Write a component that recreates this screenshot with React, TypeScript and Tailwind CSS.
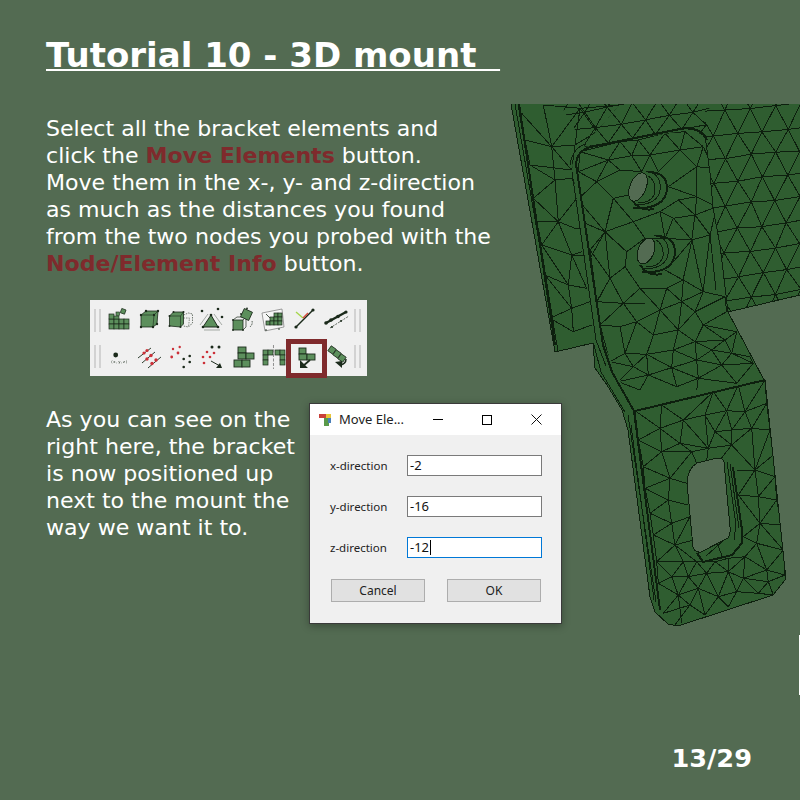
import React from "react";

type P = [number, number];
function quadMesh(a: P, b: P, c: P, d: P, nu: number, nv: number, seed: number, jit = 2) {
  let s = seed;
  const rnd = () => {
    s = (s * 9301 + 49297) % 233280;
    return s / 233280 - 0.5;
  };
  const v: Record<string, P> = {};
  for (let j = -1; j <= nv + 1; j++) {
    for (let i = -2; i <= nu + 2; i++) {
      const u = (i + (j % 2 !== 0 ? 0.5 : 0)) / nu;
      const t = j / nv;
      const x = (1 - t) * ((1 - u) * a[0] + u * b[0]) + t * ((1 - u) * c[0] + u * d[0]);
      const y = (1 - t) * ((1 - u) * a[1] + u * b[1]) + t * ((1 - u) * c[1] + u * d[1]);
      v[i + "," + j] = [x + rnd() * jit, y + rnd() * jit];
    }
  }
  const seg = (p: P, q: P) => `M${p[0].toFixed(1)} ${p[1].toFixed(1)}L${q[0].toFixed(1)} ${q[1].toFixed(1)}`;
  let out = "";
  for (let j = -1; j <= nv + 1; j++) {
    for (let i = -2; i <= nu + 2; i++) {
      const p = v[i + "," + j];
      if (v[i + 1 + "," + j]) out += seg(p, v[i + 1 + "," + j]);
      if (j <= nv) {
        const odd = j % 2 !== 0;
        const n1 = v[i + "," + (j + 1)];
        const n2 = v[(odd ? i + 1 : i - 1) + "," + (j + 1)];
        if (n1) out += seg(p, n1);
        if (n2) out += seg(p, n2);
      }
    }
  }
  return out;
}

// edge lists traced at 3x: x1,y1,x2,y2 in crop pixels, offset to the page
function edges(ox: number, oy: number, list: number[]) {
  let out = "";
  for (let i = 0; i < list.length; i += 4) {
    out += `M${(ox + list[i] / 3).toFixed(1)} ${(oy + list[i + 1] / 3).toFixed(1)}L${(ox + list[i + 2] / 3).toFixed(1)} ${(oy + list[i + 3] / 3).toFixed(1)}`;
  }
  return out;
}

const platePath =
  edges(570, 125, [
    150, 50, 115, 105, 150, 50, 185, 92, 205, 45, 185, 92, 205, 45, 240, 90, 285, 25, 240, 90, 285, 25, 330, 75, 345, 20, 330, 75, 345, 20, 400, 65,
    115, 105, 185, 92, 185, 92, 240, 90, 240, 90, 330, 75, 330, 75, 400, 65, 150, 50, 205, 45, 205, 45, 285, 25, 285, 25, 345, 20,
    115, 105, 80, 170, 115, 105, 25, 140, 115, 105, 150, 135, 150, 135, 215, 140, 185, 92, 215, 140, 240, 90, 215, 140, 240, 90, 265, 140, 330, 75, 265, 140,
    330, 75, 380, 125, 400, 65, 380, 125, 400, 65, 430, 130, 25, 140, 80, 170, 80, 170, 150, 135, 80, 170, 130, 220, 80, 170, 22, 225, 130, 220, 175, 210,
    130, 220, 105, 320, 130, 220, 190, 290, 25, 225, 105, 320, 45, 295, 105, 320, 295, 185, 380, 125, 295, 185, 380, 215, 380, 125, 430, 130, 380, 125, 380, 215,
    430, 130, 440, 245, 380, 215, 440, 245, 380, 215, 325, 225, 380, 215, 375, 270, 440, 245, 375, 270, 325, 225, 375, 270, 325, 225, 270, 260, 270, 260, 310, 280,
    375, 270, 310, 280, 310, 280, 285, 340, 375, 270, 420, 330, 375, 270, 365, 345, 310, 280, 365, 345, 285, 340, 365, 345, 365, 345, 420, 330, 440, 245, 420, 330,
    105, 320, 190, 290, 190, 290, 270, 260, 190, 290, 225, 340, 225, 340, 285, 340, 105, 320, 170, 380, 270, 260, 285, 340, 105, 320, 60, 400, 225, 340, 170, 380,
    30, 80, 115, 105, 30, 80, 25, 140, 30, 80, 150, 50,
  ]) +
  edges(590, 255, [
    100, 145, 30, 210, 100, 145, 20, 140, 100, 145, 60, 70, 100, 145, 150, 100, 100, 145, 140, 200, 100, 145, 165, 145, 60, 70, 105, 35, 60, 70, 20, 140,
    105, 35, 150, 100, 150, 100, 230, 100, 150, 100, 210, 165, 230, 100, 210, 165, 230, 100, 280, 75, 230, 100, 275, 140, 210, 165, 275, 140, 275, 140, 340, 110,
    280, 75, 340, 110, 280, 75, 275, 140, 340, 110, 315, 170, 275, 140, 315, 170, 275, 140, 265, 225, 210, 165, 265, 225, 210, 165, 190, 240, 140, 200, 210, 165,
    140, 200, 190, 240, 140, 200, 90, 215, 90, 215, 30, 210, 90, 215, 105, 295, 140, 200, 105, 295, 190, 240, 170, 298, 105, 295, 170, 298, 265, 225, 190, 240,
    265, 225, 250, 285, 170, 298, 250, 285, 250, 285, 315, 260, 265, 225, 315, 260, 315, 170, 265, 225, 315, 170, 340, 210, 340, 210, 315, 260, 340, 210, 405, 255,
    315, 260, 405, 255, 340, 110, 405, 125, 405, 125, 315, 170, 405, 125, 410, 170, 410, 170, 340, 210, 340, 210, 440, 230, 440, 230, 405, 255, 405, 255, 365, 285,
    315, 260, 365, 285, 365, 285, 425, 295, 405, 255, 425, 295, 425, 295, 480, 305, 440, 230, 425, 295, 250, 285, 320, 315, 315, 260, 320, 315, 365, 285, 320, 315,
    365, 285, 395, 330, 320, 315, 395, 330, 425, 295, 395, 330, 395, 330, 490, 325, 480, 305, 490, 325, 425, 295, 490, 325, 320, 315, 245, 338, 250, 285, 245, 338,
    170, 298, 245, 338, 170, 298, 175, 360, 245, 338, 175, 360, 105, 295, 60, 320, 105, 295, 130, 335, 170, 298, 130, 335, 130, 335, 175, 360, 60, 320, 130, 335,
    60, 320, 85, 380, 130, 335, 85, 380, 245, 338, 260, 395, 320, 315, 325, 370, 245, 338, 325, 370, 395, 330, 325, 370, 395, 330, 440, 385, 325, 370, 440, 385,
    490, 325, 440, 385, 175, 360, 260, 395, 175, 360, 150, 405, 260, 395, 325, 370, 85, 380, 150, 405, 85, 380, 175, 360, 30, 210, 60, 320, 325, 370, 320, 405,
  ]) +
  "M605 232L610 278M627 252L625 267M605 232L627 252M692 240L683 280M692 240L703 292M710 235L703 292M710 235L716 290M665 270L683 280M692 240L668 268M597 302L610 278M590 250L610 278M605 232L590 250M590 250L597 302M625 267L610 278";

const leftPath = edges(500, 95, [
  65, 55, 155, 155, 75, 135, 155, 155, 130, 30, 155, 155, 240, 40, 155, 155, 155, 155, 215, 225, 155, 155, 165, 255, 90, 210, 165, 255, 75, 135, 90, 210,
  165, 255, 100, 310, 165, 255, 215, 250, 175, 380, 165, 255, 175, 380, 100, 310, 175, 380, 110, 380, 175, 380, 230, 310, 175, 380, 225, 400, 125, 450, 175, 380,
  175, 380, 215, 480, 215, 480, 125, 450, 215, 480, 245, 470, 125, 450, 205, 570, 215, 480, 205, 570, 205, 570, 135, 540, 205, 570, 260, 580, 205, 570, 215, 640,
  135, 540, 215, 640, 215, 640, 270, 620, 215, 640, 150, 670, 215, 640, 220, 710, 150, 670, 220, 710, 220, 710, 275, 690, 240, 40, 215, 225, 130, 30, 240, 40,
  240, 40, 360, 30, 240, 40, 290, 110, 360, 30, 290, 110, 290, 110, 225, 150, 225, 150, 240, 40, 225, 150, 155, 155, 100, 310, 110, 380, 110, 380, 125, 450, 215, 225, 90, 210,
  215, 250, 245, 300, 230, 310, 245, 300, 225, 400, 255, 400, 215, 480, 260, 480, 260, 580, 215, 480,
]);

const lowerPath = edges(600, 380, [
  105, 92, 180, 145, 185, 75, 180, 145, 185, 75, 250, 120, 340, 35, 250, 120, 340, 35, 315, 105, 340, 35, 380, 92, 415, 15, 380, 92, 415, 15, 435, 95, 495, 0, 435, 95, 495, 0, 500, 70,
  180, 145, 250, 120, 250, 120, 315, 105, 315, 105, 380, 92, 380, 92, 435, 95, 435, 95, 500, 70, 105, 92, 115, 180, 180, 145, 115, 180, 180, 145, 185, 215, 180, 145, 240, 190,
  250, 120, 240, 190, 250, 120, 325, 205, 315, 105, 325, 205, 380, 92, 345, 155, 345, 155, 315, 105, 345, 155, 325, 205, 345, 155, 395, 150, 380, 92, 395, 150, 435, 95, 395, 150,
  435, 95, 455, 145, 500, 70, 455, 145, 500, 70, 510, 150, 395, 150, 455, 145, 455, 145, 510, 150, 395, 150, 395, 195, 455, 145, 395, 195, 345, 155, 395, 195,
  115, 180, 185, 215, 240, 190, 185, 215, 185, 215, 130, 260, 115, 180, 130, 260, 185, 215, 210, 295, 130, 260, 210, 295, 240, 190, 275, 215, 185, 215, 275, 215, 325, 205, 275, 215,
  240, 190, 325, 205, 325, 205, 395, 195, 395, 195, 360, 240, 325, 205, 320, 240, 275, 215, 290, 250, 275, 215, 210, 295, 210, 295, 260, 310, 130, 260, 135, 325, 210, 295, 135, 325,
  455, 145, 465, 270, 395, 195, 465, 270, 510, 150, 465, 270, 510, 150, 520, 225, 465, 270, 520, 225, 465, 270, 525, 290, 520, 225, 525, 290, 465, 270, 410, 270, 465, 270, 415, 345,
  465, 270, 475, 350, 525, 290, 475, 350, 525, 290, 530, 360, 475, 350, 530, 360, 415, 345, 475, 350, 135, 325, 205, 360, 210, 295, 205, 360, 205, 360, 265, 375, 135, 325, 150, 400,
  205, 360, 150, 400, 205, 360, 215, 430, 150, 400, 215, 430, 215, 430, 270, 410, 150, 400, 160, 465, 215, 430, 160, 465, 215, 430, 225, 495, 160, 465, 225, 495, 225, 495, 280, 480,
  270, 410, 225, 495, 160, 465, 170, 545, 225, 495, 170, 545, 225, 495, 250, 545, 225, 495, 290, 545, 475, 350, 480, 430, 530, 360, 480, 430, 530, 360, 545, 435, 480, 430, 545, 435,
  415, 345, 480, 430, 480, 430, 430, 470, 480, 430, 470, 490, 480, 430, 550, 510, 545, 435, 550, 510, 470, 490, 550, 510, 430, 470, 470, 490, 470, 490, 435, 530, 470, 490, 500, 570,
  550, 510, 500, 570, 435, 530, 500, 570, 550, 510, 555, 585, 500, 570, 555, 585, 170, 545, 250, 545, 250, 545, 290, 545, 290, 545, 345, 545, 345, 545, 385, 535, 385, 535, 435, 530,
  170, 545, 215, 590, 250, 545, 215, 590, 250, 545, 265, 590, 290, 545, 265, 590, 290, 545, 320, 580, 345, 545, 320, 580, 345, 545, 385, 575, 385, 535, 385, 575, 435, 530, 385, 575,
  435, 530, 430, 595, 500, 570, 430, 595, 500, 570, 505, 605, 555, 585, 505, 605, 215, 590, 265, 590, 265, 590, 320, 580, 320, 580, 385, 575, 385, 575, 430, 595, 430, 595, 505, 605,
  175, 610, 215, 590, 215, 590, 235, 645, 265, 590, 235, 645, 265, 590, 295, 625, 320, 580, 295, 625, 320, 580, 355, 650, 385, 575, 355, 650, 385, 575, 410, 635, 430, 595, 410, 635,
  430, 595, 475, 640, 505, 605, 475, 640, 505, 605, 520, 645, 235, 645, 295, 625, 295, 625, 355, 650, 355, 650, 410, 635, 410, 635, 475, 640, 475, 640, 520, 645, 235, 645, 190, 700,
  235, 645, 270, 675, 295, 625, 270, 675, 295, 625, 315, 705, 355, 650, 315, 705, 355, 650, 385, 680, 410, 635, 385, 680, 270, 675, 315, 705, 270, 675, 225, 735, 190, 700, 270, 675,
  175, 610, 235, 645, 170, 545, 175, 610, 235, 645, 245, 730,
]);

const silhouette =
  "511,104 800,104 800,295 728,312 763,378 765,380 785,570 785,580 773,595 678,626 668,624 655,612 650,597 628,430 622,410 607,385 595,368 593,343 555,352";
const outline =
  "M800 295L728 312L763 378L765 380L785 570L785 580L773 595L678 626L668 624L655 612L650 597L628 430L622 410L607 385L595 368L593 343L555 352L511 104";
const backRight = "705,104 800,104 800,295 728,312 720,245 713,208 710,173 705,135";
const backTop = "560,104 710,104 705,135 680,129 585,147";
const leftClip = "511,104 620,104 580,150 572,165 598,345 593,343 555,352";
const plate = "575,160 585,147 700,128 705,135 710,173 713,208 720,245 728,312 765,380 634,411 604,345";
const lower = "634,411 765,380 785,570 785,580 773,595 678,626 668,624 655,612";

const meshBackRight = quadMesh([700, 112], [800, 104], [700, 318], [800, 302], 4, 8.5, 11, 3);
const meshBackTop = quadMesh([560, 116], [705, 92], [560, 150], [705, 126], 6, 2, 17, 3);

function Mesh() {
  const line = "#0d1f0e";
  return (
    <svg className="absolute left-0 top-0" width={800} height={800} viewBox="0 0 800 800" aria-hidden>
      <defs>
        <clipPath id="cb-r"><polygon points={backRight} /></clipPath>
        <clipPath id="cb-t"><polygon points={backTop} /></clipPath>
        <clipPath id="cb-l"><polygon points={leftClip} /></clipPath>
        <clipPath id="c-p"><polygon points={plate} /></clipPath>
        <clipPath id="c-l"><polygon points={lower} /></clipPath>
      </defs>
      <polygon points={silhouette} fill="#2f5d30" />
      <g fill="none" stroke={line} strokeWidth={1} shapeRendering="crispEdges">
        <path d={meshBackRight} clipPath="url(#cb-r)" />
        <path d={meshBackTop} clipPath="url(#cb-t)" />
        <path d={leftPath} clipPath="url(#cb-l)" />
        <path d={platePath} clipPath="url(#c-p)" />
        <path d={lowerPath} clipPath="url(#c-l)" />
        <path d={outline} />
        {/* outer flange wall */}
        <path d="M515 104L558 351M518 104L556 340" />
        <path d="M519 104L555 345" strokeWidth={2} />
        {/* plate outline */}
        <path d="M576 164C577 154 582 150 590 147L680 129C692 127 702 130 707 140" strokeWidth={2} />
        <path d="M570 165C572 152 578 146 586 144" />
        <path d="M705 135L710 173L713 208L720 245L728 312" />
        <path d="M576 164L603 345L612 372L634 411" strokeWidth={2} />
        <path d="M572 172L596 340L606 366M594 345L601 372L625 412" />
        {/* lower edge */}
        <path d="M635 411L765 380" strokeWidth={2} />
        <path d="M634 411L660 610" strokeWidth={2} />
        <path d="M631 425L654 600M628 415L656 602" />
        {/* holes: counterbore arcs */}
        <path d="M648 172Q668 172 667 190Q664 210 633 208" strokeWidth={2} />
        <path d="M646 171Q662 174 660 190Q658 205 634 205M648 176Q656 180 655 192Q652 203 638 203" />
        <path d="M632 200Q640 212 654 209" strokeWidth={2} />
        <path d="M656 236Q676 236 675 254Q672 274 642 272" strokeWidth={2} />
        <path d="M654 235Q670 238 668 254Q666 269 642 269M656 240Q664 244 663 256Q660 267 646 267" />
        <path d="M640 265Q648 277 662 274" strokeWidth={2} />
        {/* slot wall */}
        <path d="M733 467L742 530L742 543L732 555L703 562L697 553" strokeWidth={2} />
        <path d="M727 462L736 525L734 540M730 464L739 528M724 540L706 556M716 540L722 556" />
      </g>
      <ellipse cx={638} cy={187} rx={8} ry={15} transform="rotate(22 638 187)" fill="#536b52" stroke={line} shapeRendering="crispEdges" />
      <ellipse cx={646} cy={251} rx={8} ry={13.5} transform="rotate(22 646 251)" fill="#536b52" stroke={line} shapeRendering="crispEdges" />
      <path
        d="M687 483Q688 468 697 463L717 458Q723 458 724 462L730 527Q731 534 728 538L701 552Q695 553 693 547Z"
        fill="#536b52"
        stroke={line}
        shapeRendering="crispEdges"
      />
      <rect x={799} y={635} width={1} height={60} fill="#ffffff" />
    </svg>
  );
}

const G = "#5c8f5c";
const D = "#1b2a1b";

function Cells({ x, y, cols, rows, s = 5 }: { x: number; y: number; cols: number; rows: number; s?: number }) {
  const out = [];
  for (let r = 0; r < rows; r++)
    for (let c = 0; c < cols; c++)
      out.push(<rect key={r + "-" + c} x={x + c * s} y={y + r * s} width={s} height={s} fill={G} stroke={D} strokeWidth={0.7} />);
  return <>{out}</>;
}
const Dot = ({ x, y, r = 1.2, c = D }: { x: number; y: number; r?: number; c?: string }) => <circle cx={x} cy={y} r={r} fill={c} />;
const Box = ({ x, y, w, h }: { x: number; y: number; w: number; h: number }) => <rect x={x} y={y} width={w} height={h} fill={G} stroke={D} strokeWidth={0.9} />;
const RED = "#cc3038";

const icons: React.ReactNode[] = [
  <>
    <Cells x={6} y={12} cols={4} rows={2} />
    <Cells x={6} y={7} cols={1} rows={1} />
    <rect x={11} y={9} width={5} height={3} fill={G} stroke={D} strokeWidth={0.6} />
    <rect x={18} y={2} width={4.5} height={4.5} fill={G} stroke={D} strokeWidth={0.7} transform="rotate(20 20 4)" />
    <rect x={13} y={5} width={3.5} height={3.5} fill={G} stroke={D} strokeWidth={0.6} />
  </>,
  <>
    <path d="M7 8L12 4L24 4L23 17L19 20L7 20Z" fill={G} stroke={D} strokeWidth={0.8} />
    <path d="M7 8L20 8L19 20M20 8L24 4" fill="none" stroke={D} strokeWidth={0.6} />
    {([[7, 8], [12, 4], [24, 4], [23, 17], [19, 20], [7, 20], [20, 8]] as P[]).map((p, i) => <Dot key={i} x={p[0]} y={p[1]} />)}
  </>,
  <g transform="translate(-1.5 0)">
    <path d="M5 9L9 5L19 5L19 17L16 20L5 19Z" fill={G} stroke={D} strokeWidth={0.8} />
    <path d="M5 9L16 9L16 20M16 9L19 5" fill="none" stroke={D} strokeWidth={0.6} />
    <path d="M19 8L24 6L28 7L28 16L24 20L19 19" fill="none" stroke={D} strokeWidth={0.6} strokeDasharray="1.5 1" />
    <path d="M19 11L25 11L24 20" fill="none" stroke={D} strokeWidth={0.5} strokeDasharray="1.5 1" />
    <Dot x={5} y={9} r={1} /><Dot x={9} y={5} r={1} /><Dot x={19} y={5} r={1} /><Dot x={5} y={19} r={1} /><Dot x={16} y={20} r={1} />
  </g>,
  <>
    <path d="M14 8L6 20L21 20Z" fill={G} stroke={D} strokeWidth={1} />
    <path d="M3 18L11 7M23 23L7 23M17 7L25 18" stroke={D} strokeWidth={0.6} fill="none" opacity={0.6} />
    <Dot x={14} y={8} r={1.3} /><Dot x={6} y={20} r={1.3} /><Dot x={21} y={20} r={1.3} />
    <Dot x={5} y={4} r={1.3} /><Dot x={21} y={2} r={1.3} /><Dot x={25} y={10} r={1.3} />
  </>,
  <>
    <rect x={5} y={13} width={10} height={10} fill={G} stroke={D} strokeWidth={0.8} />
    <path d="M5 13L9 10L18 10L18 20L15 23M15 13L18 10" fill="none" stroke={D} strokeWidth={0.7} />
    <rect x={14} y={3} width={9} height={9} fill={G} stroke={D} strokeWidth={0.8} transform="rotate(25 18.5 7.5)" />
    <path d="M24 14Q25 17 22 20" fill="none" stroke={D} strokeWidth={0.8} strokeDasharray="1.5 1" />
    <Dot x={5} y={13} r={0.9} /><Dot x={15} y={23} r={0.9} /><Dot x={5} y={23} r={0.9} /><Dot x={19} y={1.5} r={0.9} /><Dot x={13} y={7} r={0.9} />
  </>,
  <g transform="translate(-2 0)">
    <path d="M5 6L25 2L27 20L8 24Z" fill="#f6f6f6" stroke="#777777" strokeWidth={0.7} />
    <Cells x={17} y={6} cols={2} rows={1} s={4} />
    <Cells x={13} y={10} cols={3} rows={1} s={4} />
    <Cells x={9} y={14} cols={4} rows={1} s={4} />
    <path d="M9 7L13 11" stroke={D} strokeWidth={0.8} />
    <Dot x={9} y={23} r={0.8} /><Dot x={22} y={22} r={0.8} />
  </g>,
  <>
    <path d="M5 20L22 3" stroke={D} strokeWidth={1.4} />
    <Dot x={5} y={20} r={1.6} /><Dot x={22} y={3} r={1.6} />
    <path d="M5 5L12 11" stroke="#a6d64c" strokeWidth={1.4} />
    <path d="M12 11L17 6" stroke="#d84c3c" strokeWidth={1.4} />
  </>,
  <>
    <path d="M4 16L24 5" stroke={D} strokeWidth={2.4} />
    <path d="M8 21L27 9" stroke={D} strokeWidth={0.7} strokeDasharray="2 1.2" />
    <Dot x={4} y={16} r={1.8} /><Dot x={9} y={13} r={1.8} /><Dot x={16} y={9.5} r={1.8} /><Dot x={24} y={5} r={1.6} />
    <Dot x={10} y={20} r={1} /><Dot x={19} y={14} r={1} />
  </>,
  <>
    <Dot x={12.7} y={12} r={2.4} />
    <text x={16.5} y={20} fontSize={3.8} textAnchor="middle" fill={D} fontFamily="'DejaVu Sans', sans-serif" letterSpacing={0.7}>(x,y,z)</text>
  </>,
  <>
    <path d="M4 15L17 5M8 20L21 9M14 25L27 14" stroke={D} strokeWidth={0.9} />
    <Dot x={10} y={10} r={1.6} c={RED} /><Dot x={13} y={7.5} r={1.6} c={RED} />
    <Dot x={13} y={16} r={1.7} c={RED} /><Dot x={17} y={12.5} r={1.7} c={RED} />
    <Dot x={18} y={20.5} r={1.7} c={RED} /><Dot x={22} y={17} r={1.7} c={RED} />
  </>,
  <>
    <Dot x={7} y={6} r={1.2} c={RED} /><Dot x={13.7} y={4} r={1.2} c={RED} /><Dot x={12} y={10} r={1.4} c={RED} /><Dot x={5.7} y={14} r={1.4} c={RED} />
    <Dot x={23.7} y={13} r={1.3} /><Dot x={17.7} y={16} r={1.3} /><Dot x={23.7} y={19} r={1.3} /><Dot x={17.7} y={24} r={1.3} />
  </>,
  <>
    <Dot x={15} y={4} r={1.5} /><Dot x={22} y={4} r={1.5} />
    <Dot x={10} y={9} r={1.3} c={RED} /><Dot x={17} y={10} r={1.3} c={RED} /><Dot x={6} y={14} r={1.3} c={RED} /><Dot x={13} y={14} r={1.3} c={RED} /><Dot x={7} y={20} r={1.3} c={RED} />
    <path d="M14 18L23 23" stroke={D} strokeWidth={1} />
    <path d="M19 25L25 25L23 20Z" fill={D} />
  </>,
  <>
    <Box x={10} y={4} w={8} h={6} />
    <Box x={10} y={10} w={8} h={6} />
    <Box x={18} y={10} w={8} h={6} />
    <Box x={6} y={17} w={8} h={7} />
    <Box x={14} y={17} w={8} h={7} />
  </>,
  <>
    <Cells x={4} y={7} cols={2} rows={1} />
    <Cells x={4} y={12} cols={1} rows={2} />
    <Cells x={16} y={7} cols={2} rows={1} />
    <Cells x={21} y={12} cols={1} rows={2} />
    <path d="M14.5 2V26" stroke="#777777" strokeWidth={0.8} strokeDasharray="3 1.5" />
  </>,
  <>
    <Box x={8} y={5} w={7} h={6} />
    <Box x={8} y={11} w={8} h={6} />
    <Box x={16} y={11} w={8} h={6} />
    <path d="M19 17L12 23" stroke={D} strokeWidth={1.7} />
    <path d="M9 17L9 25L17 25L14.5 22.5L12.5 20.5L11 19Z" fill={D} />
  </>,
  <>
    <rect x={7} y={4} width={6} height={6} fill={G} stroke={D} strokeWidth={0.8} transform="rotate(35 10 7)" />
    <rect x={12} y={8} width={6} height={6} fill={G} stroke={D} strokeWidth={0.8} transform="rotate(35 15 11)" />
    <rect x={17} y={12} width={6} height={6} fill={G} stroke={D} strokeWidth={0.8} transform="rotate(35 20 15)" />
    <path d="M24 16Q24 21 18 22" fill="none" stroke={D} strokeWidth={1.5} />
    <path d="M13 19L20 18L20 25Z" fill={D} />
  </>,
];

function IconRow({ items }: { items: React.ReactNode[] }) {
  return (
    <div className="flex h-[28px] items-center">
      <div className="mr-[2px] h-[23px] w-[7px] border-x-2 border-[#d2d2d2]" />
      <div className="flex blur-[0.35px]">
        {items.map((it, i) => (
          <svg key={i} width={31.3} height={26} viewBox="0 0 31.3 26" className="block">
            {it}
          </svg>
        ))}
      </div>
      <div className="ml-[1px] h-[23px] w-[7px] border-x-2 border-[#d2d2d2]" />
    </div>
  );
}

function Toolbar() {
  return (
    <div className="relative ml-[44px] mt-[23px] flex h-[76px] w-[277px] flex-col justify-center gap-[8px] bg-[#f0f0f0] pl-[4px]">
      <IconRow items={icons.slice(0, 8)} />
      <IconRow items={icons.slice(8, 16)} />
      <div className="absolute left-[196px] top-[39px] h-[39px] w-[41px] border-[5px] border-[#7f2a2c]" />
    </div>
  );
}

function Field({ label, value, focus }: { label: string; value: string; focus?: boolean }) {
  return (
    <div className="flex h-[21px] items-center">
      <span className="w-[77px] pt-px text-[11.5px] text-[#222222]">{label}</span>
      <div className={`flex h-[21px] w-[135px] items-center border bg-white pl-[2px] text-[13px] text-[#111111] ${focus ? "border-[#0078d7]" : "border-[#7a7a7a]"}`}>
        {value}
        {focus && <span className="ml-[1px] h-[15px] w-px bg-black" />}
      </div>
    </div>
  );
}

function Dialog() {
  return (
    <div className="flex h-[221px] w-[253px] flex-col border border-[#3a3a3a] bg-[#f0f0f0] font-['Noto_Sans',sans-serif] shadow-[0_2px_8px_rgba(0,0,0,0.3)]">
      <div className="flex h-[31px] items-center bg-white pl-[9px]">
        <svg width={14} height={14} viewBox="0 0 14 14">
          <rect x={0} y={1} width={7} height={4} fill="#c9403a" />
          <rect x={7} y={1} width={5} height={5} fill="#e8c53a" />
          <rect x={5} y={5} width={5} height={8} fill="#5a9a4a" />
          <rect x={9} y={5} width={3} height={5} fill="#4a7fb8" />
        </svg>
        <span className="ml-[6px] w-[94px] text-[13px] text-[#222222]">Move Ele...</span>
        <div className="flex items-center">
          <span className="h-px w-[10px] bg-black" />
          <span className="ml-[39px] h-[10px] w-[10px] border border-black" />
          <svg className="ml-[39px]" width={11} height={11} viewBox="0 0 11 11">
            <path d="M0.5 0.5L10.5 10.5M10.5 0.5L0.5 10.5" stroke="#111111" strokeWidth={1} />
          </svg>
        </div>
      </div>
      <div className="flex flex-col gap-[20px] pl-[20px] pt-[20px]">
        <Field label="x-direction" value="-2" />
        <Field label="y-direction" value="-16" />
        <Field label="z-direction" value="-12" focus />
      </div>
      <div className="flex gap-[22px] pl-[21px] pt-[21px]">
        <div className="flex h-[23px] w-[94px] items-center justify-center border border-[#adadad] bg-[#e1e1e1] pt-px text-[12px] text-[#222222]">Cancel</div>
        <div className="flex h-[23px] w-[94px] items-center justify-center border border-[#adadad] bg-[#e1e1e1] pt-px text-[12px] text-[#222222]">OK</div>
      </div>
    </div>
  );
}

const Hi = ({ children }: { children: React.ReactNode }) => <span className="font-bold text-[#7f2a2c]">{children}</span>;

export default function App() {
  return (
    <div className="relative h-[800px] w-[800px] overflow-hidden bg-[#536b52] font-['DejaVu_Sans',sans-serif] text-white">
      <Mesh />
      <div className="relative pl-[46px] pt-[34px]">
        <h1 className="whitespace-pre text-[34px] font-bold leading-[42px] underline decoration-2 underline-offset-[2px]">{"Tutorial 10 - 3D mount  "}</h1>
        <p className="mt-[39px] w-[460px] text-[22.08px] leading-[27px]">
          Select all the bracket elements and
          <br />
          click the <Hi>Move Elements</Hi> button.
          <br />
          Move them in the x-, y- and z-direction
          <br />
          as much as the distances you found
          <br />
          from the two nodes you probed with the
          <br />
          <Hi>Node/Element Info</Hi> button.
        </p>
        <Toolbar />
        <div className="mt-[27px] flex items-start">
          <p className="mt-[3px] w-[263px] text-[22.08px] leading-[27px]">
            As you can see on the
            <br />
            right here, the bracket
            <br />
            is now positioned up
            <br />
            next to the mount the
            <br />
            way we want it to.
          </p>
          <Dialog />
        </div>
        <div className="mt-[119px] pr-[48px] text-right text-[25.6px] font-bold leading-[30px]">13/29</div>
      </div>
    </div>
  );
}
